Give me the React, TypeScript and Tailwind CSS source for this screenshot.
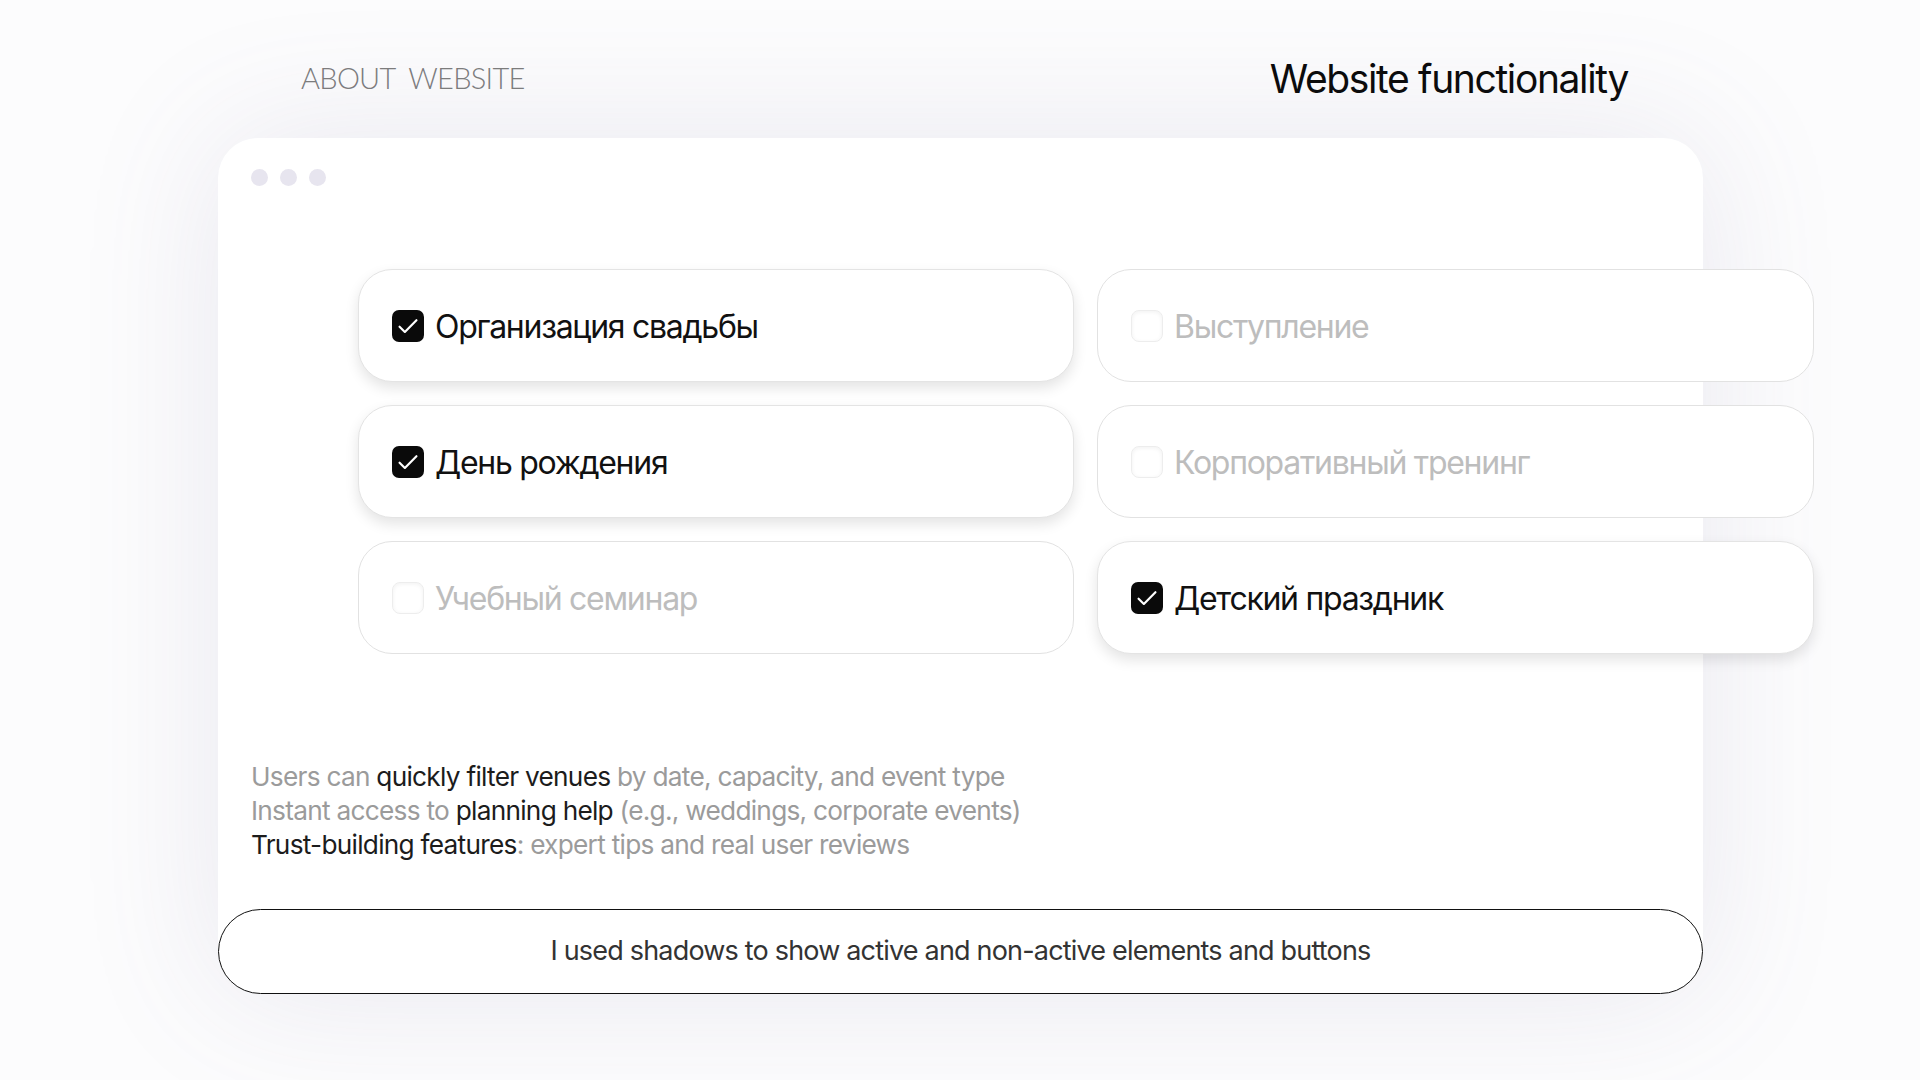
import React from "react";

interface Option {
  label: string;
  active: boolean;
}

const options: Option[] = [
  { label: "Организация свадьбы", active: true },
  { label: "Выступление", active: false },
  { label: "День рождения", active: true },
  { label: "Корпоративный тренинг", active: false },
  { label: "Учебный семинар", active: false },
  { label: "Детский праздник", active: true },
];

function CheckBox({ active }: { active: boolean }) {
  if (active) {
    return (
      <div className="w-[32px] h-[32px] rounded-[7px] bg-[#0a0a0a] flex items-center justify-center shrink-0">
        <svg width="26" height="26" viewBox="0 0 24 24" fill="none">
          <path d="M4.2 12.6l4.9 4.9L19.8 6.6" stroke="#fff" strokeWidth="2" strokeLinecap="round" strokeLinejoin="round" />
        </svg>
      </div>
    );
  }
  return (
    <div className="w-[32px] h-[32px] rounded-[8px] bg-white border border-[#ededed] shadow-[inset_0_1px_4px_rgba(0,0,0,0.06)] shrink-0" />
  );
}

function OptionCard({ opt }: { opt: Option }) {
  return (
    <div
      className={
        opt.active
          ? "h-[113px] rounded-[34px] bg-white border border-[#e4e4e4] shadow-[0_6px_14px_rgba(0,0,0,0.11)] flex items-center gap-[11px] pl-[33px]"
          : "h-[113px] rounded-[34px] bg-white border border-[#e2e2e2] flex items-center gap-[11px] pl-[33px]"
      }
    >
      <CheckBox active={opt.active} />
      <span
        className={
          opt.active
            ? "text-[32px] tracking-[-0.04em] text-[#111] leading-none mt-[3px]"
            : "text-[32px] tracking-[-0.04em] text-[#bdbdbd] leading-none mt-[3px]"
        }
      >
        {opt.label}
      </span>
    </div>
  );
}

export default function App() {
  return (
    <div
      className="w-[1920px] h-[1080px] overflow-hidden bg-[#fcfcfd] flex flex-col"
      style={{ fontFamily: "Inter, 'Noto Sans', sans-serif" }}
    >
      {/* Header */}
      <div className="flex items-end h-[98px]">
        <span
          className="ml-[301px] mb-[6px] text-[29px] font-light tracking-[-0.025em] text-[#7d7d7d] leading-none"
          style={{ fontFamily: "Lato, sans-serif" }}
        >
          ABOUT&nbsp; WEBSITE
        </span>
        <span className="ml-auto mr-[292px] text-[39px] tracking-[-0.035em] text-[#0a0a0a] leading-none">
          Website functionality
        </span>
      </div>

      {/* Browser card */}
      <div className="mt-[40px] ml-[218px] w-[1485px] bg-white rounded-t-[40px] rounded-b-[43px] shadow-[0_0_140px_rgba(110,100,150,0.13)] flex flex-col">
        <div className="flex gap-[12px] pt-[31px] pl-[33px]">
          <div className="w-[17px] h-[17px] rounded-full bg-[#e7e5ef]" />
          <div className="w-[17px] h-[17px] rounded-full bg-[#e7e5ef]" />
          <div className="w-[17px] h-[17px] rounded-full bg-[#e7e5ef]" />
        </div>

        <div className="mt-[83px] ml-[140px] grid grid-cols-[716px_717px] gap-x-[23px] gap-y-[23px] w-[1457px]">
          {options.map(opt => (
            <OptionCard key={opt.label} opt={opt} />
          ))}
        </div>

        <div className="mt-[106px] pl-[33px] text-[26.25px] leading-[34px] tracking-[-0.028em] text-[#9b9b9b]">
          <p>
            Users can <span className="text-[#1c1c1c]">quickly filter venues</span> by date, capacity, and event type
          </p>
          <p>
            Instant access to <span className="text-[#1c1c1c]">planning help</span> (e.g., weddings, corporate events)
          </p>
          <p>
            <span className="text-[#1c1c1c]">Trust-building features</span>: expert tips and real user reviews
          </p>
        </div>

        <div className="mt-[47px] h-[85px] rounded-full border-[1.5px] border-[#111] bg-white flex items-center justify-center">
          <span className="text-[27px] tracking-[-0.03em] text-[#333]">
            I used shadows to show active and non-active elements and buttons
          </span>
        </div>
      </div>
    </div>
  );
}
